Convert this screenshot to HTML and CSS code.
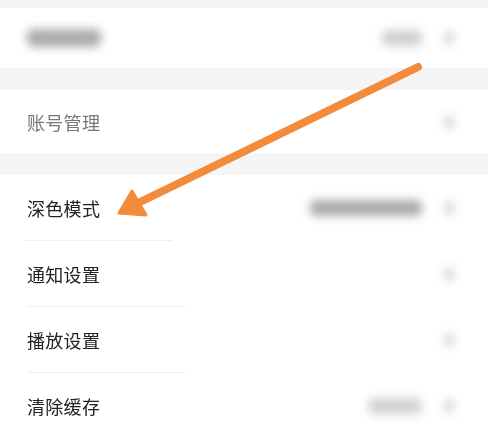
FILE: index.html
```html
<!DOCTYPE html>
<html lang="zh">
<head>
    <meta charset="UTF-8">
    <title>设置</title>
    <link rel="stylesheet" href="styles.css">
</head>
<body>
    <div class="page">
        <div class="gap gap-top"></div>
        <div class="row row-first">
            <span class="blur blur-title"></span>
            <span class="right">
                <span class="blur blur-value short"></span>
                <span class="blur chevron"></span>
            </span>
        </div>
        <div class="gap gap-mid"></div>
        <div class="row row-second">
            <span class="label muted">账号管理</span>
            <span class="right"><span class="blur chevron"></span></span>
        </div>
        <div class="gap gap-low"></div>
        <div class="group">
            <div class="row item">
                <span class="label">深色模式</span>
                <span class="right">
                    <span class="blur blur-value long"></span>
                    <span class="blur chevron"></span>
                </span>
            </div>
            <div class="divider d1"></div>
            <div class="row item">
                <span class="label">通知设置</span>
                <span class="right"><span class="blur chevron"></span></span>
            </div>
            <div class="divider d2"></div>
            <div class="row item">
                <span class="label">播放设置</span>
                <span class="right"><span class="blur chevron"></span></span>
            </div>
            <div class="divider d2"></div>
            <div class="row item">
                <span class="label">清除缓存</span>
                <span class="right">
                    <span class="blur blur-value mid"></span>
                    <span class="blur chevron"></span>
                </span>
            </div>
        </div>

        <!-- oranje pijl over de lijst -->
        <svg class="arrow" width="488" height="424" viewBox="0 0 488 424">
            <line x1="418" y1="67" x2="136" y2="204" stroke="#f38b3c" stroke-width="8" stroke-linecap="round"/>
            <polygon points="119,213 132,191 146,215" fill="#f38b3c" stroke="#f38b3c" stroke-width="3" stroke-linejoin="round"/>
        </svg>
    </div>
</body>
</html>
```

FILE: styles.css
```css
body {
    margin: 0;
    font-family: "Noto Sans CJK SC", "Noto Sans", sans-serif;
    background-color: #ffffff;
    color: #222222;
}

.page {
    position: relative;
    width: 488px;
    height: 424px;
    overflow: hidden;
    background-color: #ffffff;
}

.gap {
    background-color: #f5f5f5;
}

.gap-top { height: 8px; }
.gap-mid { height: 22px; }
.gap-low { height: 22px; }

.row {
    display: flex;
    align-items: center;
    justify-content: space-between;
    padding: 0 34px 0 27px;
    background-color: #ffffff;
}

.row-first { height: 60px; }
.row-second { height: 63px; }
.item { height: 65px; }

.label {
    font-size: 18px;
    line-height: 24px;
    letter-spacing: 0.3px;
    filter: blur(0.3px);
}

.muted {
    color: #777777;
}

.right {
    display: flex;
    align-items: center;
    gap: 22px;
}

.blur {
    display: block;
    background-color: #b8b8b8;
    border-radius: 6px;
    filter: blur(5px);
}

.blur-title {
    width: 74px;
    height: 18px;
    background-color: #ababab;
}

.blur-value {
    height: 16px;
}

.blur-value.short { width: 40px; background-color: #d0d0d0; }
.blur-value.long { width: 112px; background-color: #aaaaaa; }
.blur-value.mid { width: 54px; background-color: #d2d2d2; }

.chevron {
    width: 10px;
    height: 14px;
    background-color: #d4d4d4;
    border-radius: 50%;
}

.divider {
    height: 1px;
    background-color: #efefef;
}

.d1 { margin: 0 316px 0 24px; }
.d2 { margin: 0 302px 0 27px; }

.arrow {
    position: absolute;
    left: 0;
    top: 0;
}
```
